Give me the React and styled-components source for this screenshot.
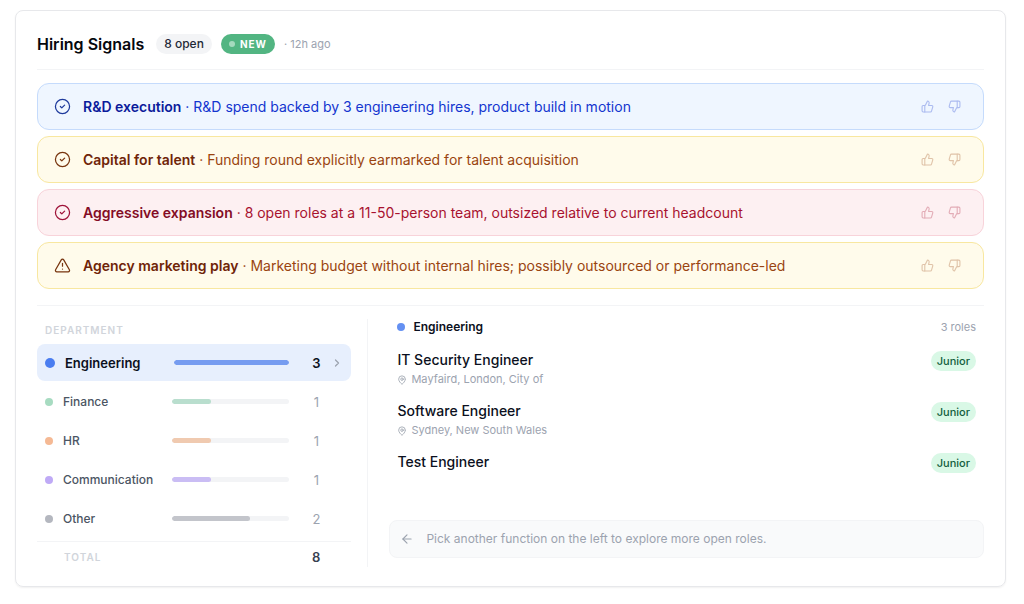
import React, { useState } from "react";
import styled, { createGlobalStyle } from "styled-components";
import {
  ArrowLeft,
  ChevronRight,
  CircleCheck,
  MapPin,
  ThumbsDown,
  ThumbsUp,
  TriangleAlert,
} from "lucide-react";

const tones = {
  blue: {
    background: "#eff6ff",
    border: "#c5dbfc",
    title: "#0b1b9b",
    text: "#1335cf",
    icon: "#1e3a9c",
  },
  amber: {
    background: "#fffbeb",
    border: "#f8e7a0",
    title: "#6f2408",
    text: "#9a4410",
    icon: "#78350f",
  },
  rose: {
    background: "#fdf0f2",
    border: "#f8d3da",
    title: "#840c25",
    text: "#a8122f",
    icon: "#9f1239",
  },
};

const signals = [
  {
    title: "R&D execution",
    text: "R&D spend backed by 3 engineering hires, product build in motion",
    tone: "blue",
    icon: CircleCheck,
  },
  {
    title: "Capital for talent",
    text: "Funding round explicitly earmarked for talent acquisition",
    tone: "amber",
    icon: CircleCheck,
  },
  {
    title: "Aggressive expansion",
    text: "8 open roles at a 11-50-person team, outsized relative to current headcount",
    tone: "rose",
    icon: CircleCheck,
  },
  {
    title: "Agency marketing play",
    text: "Marketing budget without internal hires; possibly outsourced or performance-led",
    tone: "amber",
    icon: TriangleAlert,
  },
];

const departments = [
  { name: "Engineering", count: 3, dot: "#4a7df0", bar: "#769cf0" },
  { name: "Finance", count: 1, dot: "#a7dbc1", bar: "#b9dece" },
  { name: "HR", count: 1, dot: "#f5b994", bar: "#f0cab0" },
  { name: "Communication", count: 1, dot: "#bfaaf6", bar: "#cabdf4" },
  { name: "Other", count: 2, dot: "#b4b7bf", bar: "#c3c5cb" },
];

const roles = [
  {
    title: "IT Security Engineer",
    place: "Mayfaird, London, City of",
    level: "Junior",
  },
  {
    title: "Software Engineer",
    place: "Sydney, New South Wales",
    level: "Junior",
  },
  { title: "Test Engineer", level: "Junior" },
];

const maxCount = Math.max(...departments.map((d) => d.count));
const total = departments.reduce((sum, d) => sum + d.count, 0);

function Signal({ title, text, tone, icon: Icon }) {
  return (
    <SignalRow $tone={tones[tone]}>
      <Icon size={17} strokeWidth={1.75} />
      <SignalText $tone={tones[tone]}>
        <strong>{title}</strong> · {text}
      </SignalText>
      <Votes $tone={tones[tone]}>
        <VoteButton aria-label={`Helpful: ${title}`}>
          <ThumbsUp size={13} strokeWidth={2} />
        </VoteButton>
        <VoteButton aria-label={`Not helpful: ${title}`}>
          <ThumbsDown size={13} strokeWidth={2} />
        </VoteButton>
      </Votes>
    </SignalRow>
  );
}

function App() {
  const [selected, setSelected] = useState("Engineering");

  return (
    <>
      <GlobalStyle />
      <Page>
        <Card>
          <Header>
            <Heading>Hiring Signals</Heading>
            <OpenPill>8 open</OpenPill>
            <NewPill>NEW</NewPill>
            <Age>· 12h ago</Age>
          </Header>

          <SignalList>
            {signals.map((signal) => (
              <Signal key={signal.title} {...signal} />
            ))}
          </SignalList>

          <Panels>
            <DepartmentPanel>
              <Caption>DEPARTMENT</Caption>
              <DepartmentList>
                {departments.map((d) => {
                  const active = d.name === selected;
                  return (
                    <li key={d.name}>
                      <DepartmentButton
                        $active={active}
                        aria-pressed={active}
                        onClick={() => setSelected(d.name)}
                      >
                        <Dot $color={d.dot} $size={active ? 10 : 8} />
                        <DepartmentName $active={active}>
                          {d.name}
                        </DepartmentName>
                        <Track>
                          <Fill
                            $color={d.bar}
                            style={{ width: `${(d.count / maxCount) * 100}%` }}
                          />
                        </Track>
                        <Count $active={active}>{d.count}</Count>
                        <Arrow>
                          {active && (
                            <ChevronRight size={12} strokeWidth={2.5} />
                          )}
                        </Arrow>
                      </DepartmentButton>
                    </li>
                  );
                })}
              </DepartmentList>
              <TotalRow>
                <TotalLabel>TOTAL</TotalLabel>
                <TotalCount>{total}</TotalCount>
              </TotalRow>
            </DepartmentPanel>

            <RolePanel>
              <RoleHeader>
                <Dot $color="#6490f2" $size={8} />
                <RoleHeading>Engineering</RoleHeading>
                <RoleCount>3 roles</RoleCount>
              </RoleHeader>
              <RoleList>
                {roles.map((role) => (
                  <RoleItem key={role.title}>
                    <div>
                      <RoleTitle>{role.title}</RoleTitle>
                      {role.place && (
                        <Place>
                          <MapPin size={10} />
                          {role.place}
                        </Place>
                      )}
                    </div>
                    <Level>{role.level}</Level>
                  </RoleItem>
                ))}
              </RoleList>
              <Hint>
                <ArrowLeft size={14} />
                Pick another function on the left to explore more open roles.
              </Hint>
            </RolePanel>
          </Panels>
        </Card>
      </Page>
    </>
  );
}

export default App;

const GlobalStyle = createGlobalStyle`
  * {
    box-sizing: border-box;
  }

  body {
    margin: 0;
    background: #fff;
    color: #0b1020;
    font-family: Inter, "Liberation Sans", sans-serif;
    font-size: 14px;
    line-height: 20px;
  }

  button {
    font: inherit;
    color: inherit;
    border: 0;
    background: none;
    cursor: pointer;
  }

  svg {
    display: block;
    flex: none;
  }
`;

const Page = styled.main`
  padding: 10px 18px 16px 15px;
`;

const Card = styled.section`
  padding: 20px 21px 19px;
  border: 1px solid #e7e8eb;
  border-radius: 8px;
  box-shadow: 0 1px 2px rgba(0, 0, 0, 0.06);
`;

const Header = styled.header`
  display: flex;
  align-items: center;
  padding: 2px 0 14px;
  border-bottom: 1px solid #f3f4f6;
`;

const Heading = styled.h1`
  margin: 0 12px 0 0;
  font-size: 16px;
  font-weight: 600;
  line-height: 22px;
  color: #05070d;
`;

const Pill = styled.span`
  display: flex;
  align-items: center;
  height: 20px;
  border-radius: 10px;
`;

const OpenPill = styled(Pill)`
  margin-right: 9px;
  padding: 0 8px;
  background: #f3f4f6;
  color: #1f2937;
  font-size: 12px;
  font-weight: 500;
`;

const NewPill = styled(Pill)`
  gap: 5px;
  margin-right: 9px;
  padding: 0 8px;
  background: #52b582;
  color: #fff;
  font-size: 10px;
  font-weight: 700;
  letter-spacing: 1px;

  &::before {
    content: "";
    width: 6px;
    height: 6px;
    border-radius: 50%;
    background: #a4dabd;
  }
`;

const Age = styled.span`
  color: #9ca3af;
  font-size: 11px;
`;

const SignalList = styled.ul`
  display: grid;
  gap: 6px;
  margin: 0;
  padding: 13px 0 16px;
  list-style: none;
  border-bottom: 1px solid #f3f4f6;
`;

const SignalRow = styled.li`
  display: flex;
  align-items: center;
  gap: 12px;
  min-height: 47px;
  padding: 8px 17px 8px 16px;
  border: 1px solid ${({ $tone }) => $tone.border};
  border-radius: 12px;
  background: ${({ $tone }) => $tone.background};
  color: ${({ $tone }) => $tone.icon};
`;

const SignalText = styled.p`
  flex: 1;
  margin: 0;
  color: ${({ $tone }) => $tone.text};

  strong {
    font-weight: 600;
    color: ${({ $tone }) => $tone.title};
  }
`;

const Votes = styled.div`
  display: flex;
  gap: 4px;
  color: ${({ $tone }) => $tone.text};
  opacity: 0.3;
`;

const VoteButton = styled.button`
  padding: 5px;
`;

const Panels = styled.div`
  display: grid;
  grid-template-columns: 35% 1fr;
  padding-top: 13px;
`;

const DepartmentPanel = styled.section`
  padding-right: 16px;
  border-right: 1px solid #f3f4f6;
`;

const Caption = styled.h2`
  margin: 0;
  padding: 3px 8px 5px;
  color: #d1d5db;
  font-size: 10px;
  font-weight: 600;
  line-height: 17px;
  letter-spacing: 1px;
`;

const DepartmentList = styled.ul`
  display: grid;
  gap: 2px;
  margin: 0;
  padding: 0 0 4px;
  list-style: none;
`;

const DepartmentButton = styled.button`
  display: flex;
  align-items: center;
  width: 100%;
  height: 37px;
  padding: 0 8px;
  border-radius: 8px;
  background: ${({ $active }) => ($active ? "#e7effd" : "transparent")};
  text-align: left;
`;

const Dot = styled.span`
  flex: none;
  width: ${({ $size }) => $size}px;
  height: ${({ $size }) => $size}px;
  border-radius: 50%;
  background: ${({ $color }) => $color};
`;

const DepartmentName = styled.span`
  flex: none;
  width: 109px;
  margin-left: 10px;
  font-size: ${({ $active }) => ($active ? 13 : 12)}px;
  font-weight: ${({ $active }) => ($active ? 600 : 500)};
  color: ${({ $active }) => ($active ? "#0b1020" : "#4b5563")};
`;

const Track = styled.span`
  flex: 1;
  height: 5px;
  border-radius: 3px;
  background: #f3f4f6;
  overflow: hidden;
`;

const Fill = styled.span`
  display: block;
  height: 100%;
  border-radius: 3px;
  background: ${({ $color }) => $color};
`;

const Count = styled.span`
  width: 10px;
  margin-left: 22px;
  font-size: 13px;
  font-weight: ${({ $active }) => ($active ? 600 : 400)};
  color: ${({ $active }) => ($active ? "#0b1020" : "#9ca3af")};
  text-align: center;
`;

const Arrow = styled.span`
  width: 12px;
  margin-left: 10px;
  color: #9ca3af;
`;

const TotalRow = styled.div`
  display: flex;
  align-items: center;
  justify-content: space-between;
  padding: 5px 31px 0 27px;
  border-top: 1px solid #f3f4f6;
`;

const TotalLabel = styled.span`
  color: #d1d5db;
  font-size: 10px;
  font-weight: 600;
  letter-spacing: 1px;
`;

const TotalCount = styled.span`
  color: #374151;
  font-size: 13px;
  font-weight: 600;
`;

const RolePanel = styled.section`
  display: flex;
  flex-direction: column;
  padding: 0 0 9px 21px;
`;

const RoleHeader = styled.header`
  display: flex;
  align-items: center;
  height: 15px;
  padding: 0 8px;
`;

const RoleHeading = styled.h2`
  flex: 1;
  margin: 0 0 0 8px;
  font-size: 12px;
  font-weight: 600;
`;

const RoleCount = styled.span`
  color: #9ca3af;
  font-size: 11px;
`;

const RoleList = styled.ul`
  display: grid;
  gap: 12px;
  margin: 0;
  padding: 16px 8px;
  list-style: none;
`;

const RoleItem = styled.li`
  display: flex;
  align-items: flex-start;
  justify-content: space-between;
`;

const RoleTitle = styled.h3`
  margin: 0;
  font-size: 14px;
  font-weight: 500;
  line-height: 20px;
`;

const Place = styled.p`
  display: flex;
  align-items: center;
  gap: 4px;
  margin: 0;
  color: #9ca3af;
  font-size: 11px;
  line-height: 19px;
`;

const Level = styled(Pill)`
  margin-top: 1px;
  padding: 0 6px;
  background: #d9f8e6;
  color: #135e3e;
  font-size: 11px;
  font-weight: 500;
`;

const Hint = styled.p`
  display: flex;
  align-items: center;
  gap: 12px;
  height: 38px;
  margin: auto 0 0;
  padding: 0 10px;
  border: 1px solid #f3f4f6;
  border-radius: 8px;
  background: #f9fafb;
  color: #9ca3af;
  font-size: 12px;
`;
